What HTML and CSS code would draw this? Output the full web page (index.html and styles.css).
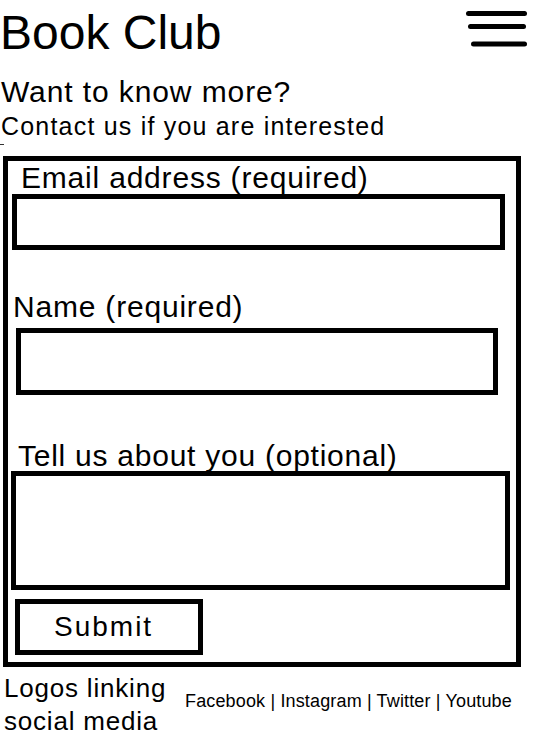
FILE: index.html
```html
<!DOCTYPE html>
<html lang="en">
<head>
<meta charset="utf-8">
<title>Book Club</title>
<link rel="stylesheet" href="styles.css">
</head>
<body>
<div class="page">
  <header class="header">
    <h1 class="title">Book Club</h1>
    <svg class="menu" viewBox="0 0 66 40" aria-label="Menu">
      <line x1="5.5" y1="5.5" x2="61.5" y2="5.5"/>
      <line x1="7.5" y1="18.5" x2="60.5" y2="18.5"/>
      <line x1="10.5" y1="36" x2="61.5" y2="36"/>
    </svg>
  </header>
  <h2 class="intro-heading">Want to know more?</h2>
  <p class="intro-text">Contact us if you are interested</p>
  <div class="tick"></div>
  <form class="form">
    <label class="field-label label-email" for="email">Email address (required)</label>
    <input class="field input-email" id="email" type="email">
    <label class="field-label label-name" for="name">Name (required)</label>
    <input class="field input-name" id="name" type="text">
    <label class="field-label label-about" for="about">Tell us about you (optional)</label>
    <textarea class="field input-about" id="about"></textarea>
    <button class="submit" type="button">Submit</button>
  </form>
  <footer class="footer">
    <p class="footer-note">Logos linking social media</p>
    <nav class="social"><a href="#">Facebook</a> | <a href="#">Instagram</a> | <a href="#">Twitter</a> | <a href="#">Youtube</a></nav>
  </footer>
</div>
</body>
</html>
```
FILE: styles.css
```css
* { box-sizing: border-box; }
html, body { overflow: hidden; }
body {
  margin: 0;
  font-family: "Liberation Sans", Arial, sans-serif;
  color: #000;
  background: #fff;
}
.page { width: 533px; height: 737px; }

.header {
  display: flex;
  justify-content: space-between;
  align-items: flex-start;
}
.title {
  margin: 5px 0 0 0;
  font-size: 48px;
  line-height: 56px;
  font-weight: normal;
}
.menu {
  width: 66px;
  height: 40px;
  margin: 8px 4px 0 0;
  stroke: #000;
  stroke-width: 5;
  stroke-linecap: round;
}

.intro-heading {
  margin: 15px 0 0 1px;
  font-size: 30px;
  line-height: 32px;
  font-weight: normal;
  letter-spacing: 0.9px;
}
.intro-text {
  margin: 3px 0 0 1px;
  font-size: 25px;
  line-height: 30px;
  letter-spacing: 1.2px;
}
.tick {
  width: 4px;
  height: 1px;
  margin-top: 3px;
  background: #333;
}

.form {
  margin: 11px 0 0 3px;
  width: 518px;
  border: 5px solid #000;
  padding: 2px 0 7px 0;
}
.field-label {
  display: block;
  font-size: 30px;
  line-height: 30px;
  letter-spacing: 0.8px;
}
.label-email { margin-left: 13px; }
.label-name { margin: 42px 0 0 5px; }
.label-about { margin: 46px 0 0 10px; letter-spacing: 0.75px; }

.field {
  display: block;
  border: 5px solid #000;
  border-radius: 0;
  padding: 0;
  background: #fff;
  font: inherit;
  outline: none;
}
.input-email { margin: 1px 0 0 4px; width: 493px; height: 56px; }
.input-name { margin: 6px 0 0 8px; width: 482px; height: 67px; }
.input-about { margin: 0 0 0 3px; width: 499px; height: 119px; resize: none; }

.submit {
  display: block;
  margin: 9px 0 0 7px;
  width: 188px;
  height: 56px;
  border: 5px solid #000;
  border-radius: 0;
  background: #fff;
  color: #000;
  font-family: inherit;
  font-size: 28px;
  line-height: 32px;
  letter-spacing: 2px;
  text-align: left;
  padding: 0 0 0 34px;
}

.footer {
  display: flex;
  align-items: flex-start;
  margin-top: 5px;
  padding-left: 4px;
}
.footer-note {
  width: 181px;
  margin: 0;
  font-size: 26px;
  line-height: 33px;
  letter-spacing: 0.8px;
}
.social {
  margin-top: 18px;
  font-size: 18px;
  line-height: 22px;
  letter-spacing: 0.15px;
}
.social a { color: #000; text-decoration: none; }
```
